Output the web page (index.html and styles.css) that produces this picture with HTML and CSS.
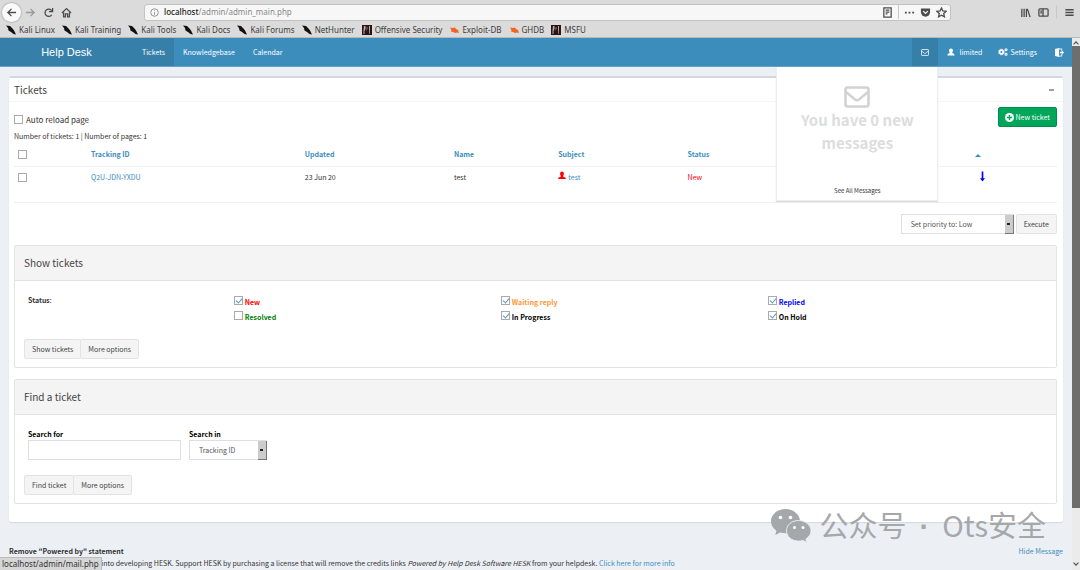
FILE: index.html
```html
<!DOCTYPE html>
<html lang="en">
<head>
  <meta charset="UTF-8">
  <meta name="viewport" content="width=device-width, initial-scale=1.0">
  <title>Help Desk</title>
  <link rel="stylesheet" href="styles.css">
</head>
<body>
<svg class="defs" aria-hidden="true">
  <symbol id="kali" viewBox="0 0 10 10"><path d="M0 .5 4 1l2.500 2.500L8 5.500 10 9.500 7.500 9 5 7 2.500 5.500 2 3z" fill="#111"/></symbol>
  <symbol id="offsec" viewBox="0 0 10 10"><path d="M0 0h10v10H0z" fill="#2a1516"/><path d="M2 1h1.500v3l-1 2v3H1.500V5zM7 1h1v3l-.5 5H7z" fill="#b9abab"/><path d="M4.500 2h1v2l-1 2z" fill="#876"/></symbol>
  <symbol id="exploit" viewBox="0 0 10 10"><path d="M1 2.500 4 3l2-.5 1 1.500 2 1 1 3-2-.5L6 8 4 7 2 6.500 2.500 5z" fill="#f0641e"/></symbol>
  <symbol id="envelope" viewBox="0 0 26 22"><rect x="1.500" y="1.500" width="23" height="19" rx="2" fill="none" stroke="currentColor" stroke-width="2.600"/><path d="M2 6l9 7.500q2 1.500 4 0L24 6" fill="none" stroke="currentColor" stroke-width="2.400"/></symbol>
</svg>

<header class="browser">
  <div class="toolbar">
    <button class="tool back" aria-label="Back"><svg viewBox="0 0 12 12"><path d="M11 6H2M6 2 2 6l4 4"/></svg></button>
    <button class="tool forward" aria-label="Forward"><svg viewBox="0 0 12 12"><path d="M1 6h9M6 2l4 4-4 4"/></svg></button>
    <button class="tool" aria-label="Reload"><svg viewBox="0 0 12 12"><path d="M9.500 8.500A4 4 0 1 1 9.500 4M10.500 1v4h-4"/></svg></button>
    <button class="tool" aria-label="Home"><svg viewBox="0 0 12 12"><path d="M1 6.500 6 1.800l5 4.700M2.800 6v4.700h2V7.500h2.400v3.200h2V6"/></svg></button>
    <div class="url-bar">
      <svg class="info" viewBox="0 0 12 12"><circle cx="6" cy="6" r="5"/><path d="M6 5.500V9M6 3v1"/></svg>
      <div class="url"><b>localhost</b>/admin/admin_main.php</div>
      <button class="tool" aria-label="Reader view"><svg viewBox="0 0 12 12"><path d="M2 1h8v10H2zM4 3.500h4M4 5.500h4M4 7.500h2"/></svg></button>
      <span class="split"></span>
      <button class="tool" aria-label="Page actions"><svg viewBox="0 0 12 12"><path d="M1 5.200h2v2H1zM5 5.200h2v2H5zM9 5.200h2v2H9z" fill="#4c4c4c" stroke="none"/></svg></button>
      <button class="tool" aria-label="Pocket"><svg viewBox="0 0 12 12"><path d="M1 1.500h10v4a5 5 0 0 1-10 0z" fill="#4c4c4c" stroke="none"/><path d="M3.500 4.500 6 7l2.500-2.500" stroke="#f7f7f7"/></svg></button>
      <button class="tool" aria-label="Bookmark"><svg viewBox="0 0 12 12"><path d="m6 1 1.500 3.300 3.600.4-2.700 2.400.8 3.600L6 8.900l-3.200 1.800.8-3.600L.9 4.700l3.600-.4z"/></svg></button>
    </div>
    <button class="tool library" aria-label="Library"><svg viewBox="0 0 12 12"><path d="M2 2v9M4.500 2v9M7 2v9M8 2l3 9"/></svg></button>
    <button class="tool" aria-label="Sidebars"><svg viewBox="0 0 12 12"><rect x="1" y="2" width="10" height="8" rx="1"/><path d="M5.500 2v8M2.500 4.500h2M2.500 6.500h2"/></svg></button>
    <span class="split"></span>
    <button class="tool" aria-label="Menu"><svg viewBox="0 0 12 12"><path d="M1.500 3h9M1.500 6h9M1.500 9h9"/></svg></button>
  </div>
  <nav class="bookmarks">
    <a href="#"><svg><use href="#kali"/></svg>Kali Linux</a>
    <a href="#"><svg><use href="#kali"/></svg>Kali Training</a>
    <a href="#"><svg><use href="#kali"/></svg>Kali Tools</a>
    <a href="#"><svg><use href="#kali"/></svg>Kali Docs</a>
    <a href="#"><svg><use href="#kali"/></svg>Kali Forums</a>
    <a href="#"><svg><use href="#kali"/></svg>NetHunter</a>
    <a href="#"><svg><use href="#offsec"/></svg>Offensive Security</a>
    <a href="#"><svg><use href="#exploit"/></svg>Exploit-DB</a>
    <a href="#"><svg><use href="#exploit"/></svg>GHDB</a>
    <a href="#"><svg><use href="#offsec"/></svg>MSFU</a>
  </nav>
</header>

<div class="viewport">
  <div class="page">
    <nav class="navbar">
      <a class="brand" href="#">Help Desk</a>
      <a class="active" href="#">Tickets</a>
      <a href="#">Knowledgebase</a>
      <a href="#">Calendar</a>
      <div class="nav-right">
        <div class="mail">
          <a class="active" href="#" aria-label="Messages"><svg class="mail-icon"><use href="#envelope"/></svg></a>
          <div class="mail-menu">
            <svg class="mail-big"><use href="#envelope"/></svg>
            <h3>You have 0 new messages</h3>
            <a href="#">See All Messages</a>
          </div>
        </div>
        <a href="#"><svg viewBox="0 0 10 10"><path d="M5 .5c3 0 3 4 1.300 5 .2.800 3 .8 3.200 4H.5c.2-3.200 3-3.200 3.200-4C2 4.500 2 .5 5 .5z"/></svg>limited</a>
        <a class="settings" href="#"><svg viewBox="0 0 12 10"><circle cx="4" cy="5" r="2.300" fill="none" stroke="#fff" stroke-width="2"/><circle cx="4" cy="5" r="3.600" fill="none" stroke="#fff" stroke-dasharray="1.600 1.230"/><circle cx="9.800" cy="2.200" r="1.300" fill="none" stroke="#fff" stroke-width="1.300"/><circle cx="9.800" cy="7.800" r="1.300" fill="none" stroke="#fff" stroke-width="1.300"/></svg>Settings</a>
        <a class="logout" href="#" aria-label="Logout"><svg viewBox="0 0 10 10"><path d="M0 1 4.500 0v10L0 9z"/><path d="M4 1h3.500v2M4 9h3.500V7" fill="none" stroke="#fff"/><path d="M5.500 4.200H7.500V2.500L10 5 7.500 7.500V5.800h-2z"/></svg></a>
      </div>
    </nav>

    <main class="box">
      <div class="box-header">
        <h1>Tickets</h1>
        <button class="collapse" aria-label="Collapse"></button>
      </div>
      <div class="box-body">
        <div class="top-row">
          <label class="reload"><input type="checkbox">Auto reload page</label>
          <button class="btn-new"><svg viewBox="0 0 10 10"><circle cx="5" cy="5" r="5" fill="#fff"/><path d="M5 2.200v5.600M2.200 5h5.600" stroke="#00a65a" stroke-width="1.600"/></svg>New ticket</button>
        </div>
        <p class="count">Number of tickets: 1 | Number of pages: 1</p>
        <table class="tickets">
          <colgroup>
            <col class="c-check"><col class="c-id"><col class="c-updated"><col class="c-name"><col class="c-subject"><col class="c-status"><col class="c-priority">
          </colgroup>
          <thead>
            <tr>
              <th><input type="checkbox" aria-label="Select all"></th>
              <th><a href="#">Tracking ID</a></th>
              <th><a href="#">Updated</a></th>
              <th><a href="#">Name</a></th>
              <th><a href="#">Subject</a></th>
              <th><a href="#">Status</a></th>
              <th><a href="#" aria-label="Priority"><span class="caret"></span></a></th>
            </tr>
          </thead>
          <tbody>
            <tr>
              <td><input type="checkbox" aria-label="Select ticket"></td>
              <td><a href="#">Q2U-JDN-YXDU</a></td>
              <td>23 Jun 20</td>
              <td>test</td>
              <td><svg class="owner" viewBox="0 0 10 10"><path d="M5 0c3 0 2.800 4.300 1.300 5.500 0 1.500 3.700 1 3.700 4H0c0-3 3.700-2.500 3.700-4C2.200 4.300 2 0 5 0z"/></svg><a href="#">test</a></td>
              <td class="new">New</td>
              <td><svg class="priority" viewBox="0 0 6 12"><path d="M2 0h2v8h2L3 12 0 8h2z"/></svg></td>
            </tr>
          </tbody>
        </table>

        <div class="bulk">
          <span class="select"><select class="priority-select" aria-label="Action"><option>Set priority to: Low</option></select></span>
          <button class="btn">Execute</button>
        </div>

        <section class="panel">
          <h2>Show tickets</h2>
          <div class="panel-body">
            <div class="status">
              <div class="status-label"><b>Status</b>:</div>
              <label class="new"><input type="checkbox" checked>New</label>
              <label class="waiting"><input type="checkbox" checked>Waiting reply</label>
              <label class="replied"><input type="checkbox" checked>Replied</label>
              <label class="resolved"><input type="checkbox">Resolved</label>
              <label><input type="checkbox" checked>In Progress</label>
              <label><input type="checkbox" checked>On Hold</label>
            </div>
            <div class="btn-group">
              <button class="btn">Show tickets</button>
              <button class="btn">More options</button>
            </div>
          </div>
        </section>

        <section class="panel">
          <h2>Find a ticket</h2>
          <div class="panel-body">
            <div class="search">
              <div class="field">
                <label for="q">Search for</label>
                <input type="text" id="q">
              </div>
              <div class="field">
                <label for="what">Search in</label>
                <span class="select"><select id="what"><option>Tracking ID</option></select></span>
              </div>
            </div>
            <div class="btn-group">
              <button class="btn">Find ticket</button>
              <button class="btn">More options</button>
            </div>
          </div>
        </section>
      </div>
    </main>

    <footer class="notice">
      <div class="notice-head"><b>Remove "Powered by" statement</b><a href="#">Hide Message</a></div>
      <p>A lot of time and effort went into developing HESK. Support HESK by purchasing a license that will remove the credits links <i>Powered by Help Desk Software HESK</i> from your helpdesk. <a href="#">Click here for more info</a></p>
    </footer>
  </div>
  <div class="scrollbar">
    <span class="arrow up"></span>
    <span class="thumb"></span>
    <span class="arrow down"></span>
  </div>
</div>

<div class="link-status">localhost/admin/mail.php</div>

<div class="watermark">
  <svg viewBox="0 0 40 34">
    <path d="M14.500 0C6.500 0 0 5.500 0 12.300c0 3.900 2.100 7.200 5.400 9.400L4.300 26l4.900-2.600c1.700.5 3.400.8 5.300.8C22.500 24.200 29 19 29 12.300S22.500 0 14.500 0z"/>
    <path class="front" d="M27.500 11.500c-6.800 0-12 4.600-12 10.300s5.200 10.300 12 10.300c1.500 0 3-.3 4.400-.7l4 2-1-3.400c3-1.900 5.100-4.800 5.100-8.200 0-5.700-5.700-10.300-12.500-10.300z"/>
    <g fill="#fff"><circle cx="9.500" cy="8.500" r="1.800"/><circle cx="19.500" cy="8.500" r="1.800"/><circle cx="23.500" cy="18.500" r="1.500"/><circle cx="32" cy="18.500" r="1.500"/></g>
  </svg>
  <span>公众号<span class="dot">·</span>Ots安全</span>
</div>
</body>
</html>
```
FILE: styles.css
```css
* {
  box-sizing: border-box;
}
body {
  margin: 0;
  height: 100vh;
  display: flex;
  flex-direction: column;
  overflow: hidden;
  font-family: "Noto Sans CJK SC", "Noto Sans", sans-serif;
  font-size: 7px;
  line-height: 12px;
  color: #333;
  background: #ecf0f5;
}
a {
  color: #3c8dbc;
  text-decoration: none;
}
h1, h2, h3, p {
  margin: 0;
  font-weight: normal;
}
button {
  font: inherit;
  color: inherit;
  padding: 0;
  border: none;
  background: none;
  cursor: pointer;
}
.defs {
  position: absolute;
  width: 0;
  height: 0;
}

/* browser chrome */
.browser {
  background: #dbdbdb;
  border-bottom: 1px solid #b9b9b9;
  font-family: "Noto Sans", sans-serif;
  font-size: 8px;
  color: #3b3b3b;
}
.toolbar {
  display: flex;
  align-items: center;
  gap: 7px;
  height: 22px;
  padding: 2px 5px 0 2px;
}
.tool {
  display: flex;
  flex: none;
}
.tool svg, .info {
  width: 11px;
  height: 11px;
  fill: none;
  stroke: #4c4c4c;
  stroke-width: 1.4;
}
.back {
  padding: 4px;
  border-radius: 50%;
  background: #fafafa;
  box-shadow: 0 0 1px 1px #bbb;
}
.back + .forward {
  margin-left: -3px;
}
.forward svg {
  stroke: #999;
}
.url-bar {
  flex: 1;
  display: flex;
  align-items: center;
  gap: 5px;
  height: 17px;
  margin-left: 65px;
  padding: 0 3px 0 5px;
  border: 1px solid #c2c2c2;
  border-radius: 3px;
  background: #f7f7f7;
}
.info {
  width: 9px;
  height: 9px;
  stroke: #777;
  stroke-width: 1;
}
.url {
  flex: 1;
  color: #888;
}
.url b {
  font-weight: 500;
  color: #222;
}
.split {
  width: 1px;
  height: 14px;
  background: #c8c8c8;
}
.library {
  margin-left: 62px;
}
.bookmarks {
  display: flex;
  gap: 7px;
  height: 15px;
  padding-left: 6px;
  line-height: 15px;
}
.bookmarks a {
  display: flex;
  align-items: center;
  gap: 3px;
  color: inherit;
  white-space: nowrap;
}
.bookmarks svg {
  width: 10px;
  height: 10px;
}

.viewport {
  flex: 1;
  min-height: 0;
  display: flex;
}
.page {
  flex: 1;
  overflow: hidden;
}

/* navbar */
.navbar {
  display: flex;
  height: 29px;
  background: #3c8dbc;
  border-bottom: 1px solid #5fa3cb;
}
.navbar > a, .nav-right > a, .mail > a {
  display: flex;
  align-items: center;
  gap: 4px;
  height: 28px;
  padding: 0 9px;
  color: #fff;
}
.navbar svg {
  width: 8px;
  height: 8px;
  fill: #fff;
}
.navbar .brand {
  width: 133px;
  justify-content: center;
  background: #367fa9;
  font-family: "Liberation Sans", Arial, sans-serif;
  font-size: 11px;
}
.navbar .active {
  background: #367fa9;
}
.nav-right {
  display: flex;
  margin-left: auto;
}
.nav-right .settings {
  gap: 2px;
  padding-left: 7px;
}
.navbar .settings svg {
  width: 10px;
}
.nav-right .logout {
  padding-right: 8px;
}
.navbar .logout svg {
  width: 9px;
  height: 9px;
}
.mail {
  position: relative;
}
.navbar .mail-icon {
  width: 8px;
  height: 7px;
  color: #fff;
}
.mail-menu {
  position: absolute;
  top: 29px;
  right: 0;
  z-index: 2;
  width: 162px;
  height: 134px;
  padding-top: 19px;
  display: flex;
  flex-direction: column;
  align-items: center;
  background: #fff;
  border: 1px solid #eee;
  border-top: none;
  box-shadow: 0 1px 1px #ddd;
  text-align: center;
}
.mail-menu .mail-big {
  width: 26px;
  height: 22px;
  color: #d2d2d2;
}
.mail-menu h3 {
  padding: 0 20px;
  font-size: 15px;
  line-height: 23px;
  font-weight: bold;
  color: #ddd;
}
.mail-menu a {
  margin-top: auto;
  padding-bottom: 3px;
  font-size: 6px;
  color: #333;
}

/* main box */
.box {
  margin: 9px 9px 0;
  border-top: 2px solid #d2d6de;
  border-radius: 2px;
  background: #fff;
  box-shadow: 0 1px 1px #d5d8dc;
}
.box-header {
  display: flex;
  align-items: center;
  justify-content: space-between;
  height: 24px;
  padding: 0 9px 0 5px;
  border-bottom: 1px solid #f4f4f4;
}
.box-header h1, .panel h2 {
  font-size: 10px;
  color: #444;
}
.collapse {
  width: 5px;
  height: 2px;
  background: #97a0b3;
}
.box-body {
  padding: 5px 6px 18px 5px;
}
.top-row {
  display: flex;
  justify-content: space-between;
  height: 23px;
}
.reload {
  display: flex;
  align-items: center;
  align-self: flex-end;
  gap: 3px;
  height: 21px;
  font-size: 8px;
}
.btn-new {
  display: flex;
  align-items: center;
  gap: 2px;
  height: 20px;
  padding: 0 6px;
  border: 1px solid #008d4c;
  border-radius: 2px;
  background: #00a65a;
  color: #fff;
}
.btn-new svg {
  width: 9px;
  height: 9px;
}
input[type="checkbox"] {
  appearance: none;
  position: relative;
  flex: none;
  width: 9px;
  height: 9px;
  margin: 0;
  border: 1px solid #aaa;
  background: #fff;
}
input[type="checkbox"]:checked::after {
  content: "";
  position: absolute;
  top: 0;
  left: 2px;
  width: 3px;
  height: 5px;
  border: solid #5b9ac8;
  border-width: 0 1px 1px 0;
  transform: rotate(40deg);
}

/* ticket list */
.tickets {
  width: 100%;
  margin-top: 1px;
  table-layout: fixed;
  border-collapse: collapse;
}
.c-check { width: 7%; }
.c-id { width: 20.5%; }
.c-updated { width: 14.3%; }
.c-name { width: 10%; }
.c-subject { width: 12.4%; }
.c-status { width: 27.6%; }
.tickets th, .tickets td {
  height: 23px;
  padding: 0 4px;
  text-align: left;
  border-bottom: 1px solid #f0f0f0;
}
.tickets tbody td {
  height: 36px;
  padding-top: 4px;
  vertical-align: top;
}
.tickets input {
  display: block;
}
.tickets td input {
  margin-top: 2px;
}
.caret {
  display: inline-block;
  border: 3px solid transparent;
  border-top: none;
  border-bottom-color: #3c8dbc;
  vertical-align: middle;
}
.owner {
  width: 8px;
  height: 9px;
  margin-right: 2px;
  fill: red;
}
.priority {
  width: 5px;
  height: 11px;
  margin-left: 5px;
  fill: blue;
}
.new { color: red; }
.waiting { color: #ff9933; }
.replied { color: blue; }
.resolved { color: green; }

/* controls */
.bulk {
  display: flex;
  justify-content: flex-end;
  gap: 2px;
  margin: 11px 0;
}
.btn {
  height: 20px;
  padding: 0 7px;
  border: 1px solid #e3e3e3;
  border-radius: 2px;
  background: #f4f4f4;
  color: #444;
}
.btn-group {
  display: flex;
}
.btn-group .btn + .btn {
  margin-left: -1px;
}
select, input[type="text"] {
  appearance: none;
  height: 20px;
  margin: 0;
  padding: 0 9px;
  border: 1px solid #dcdfe5;
  border-radius: 0;
  background: #fff;
  font: inherit;
  color: #555;
}
.select {
  position: relative;
  display: inline-flex;
}
.select select {
  width: 78px;
}
.select .priority-select {
  width: 113px;
}
.select::after {
  content: "";
  position: absolute;
  top: 1px;
  right: 0;
  width: 8px;
  height: 18px;
  background: linear-gradient(#222, #222) 2px 8px / 3px 2px no-repeat, #ccc;
  border-right: 1px solid #777;
  border-bottom: 1px solid #777;
  pointer-events: none;
}

/* panels */
.panel {
  border: 1px solid #e3e3e3;
  border-radius: 2px;
}
.panel + .panel {
  margin-top: 11px;
}
.panel h2 {
  padding: 0 9px;
  line-height: 34px;
  background: #f4f4f4;
  border-bottom: 1px solid #e3e3e3;
}
.panel-body {
  padding: 13px 9px 8px;
}
.status {
  display: grid;
  grid-template-columns: 20.2% 26.2% 26.2% 1fr;
  row-gap: 2px;
  padding-left: 4px;
  color: #000;
}
.status-label {
  grid-row: span 2;
  color: #333;
}
.status label {
  display: flex;
  align-items: flex-end;
  gap: 2px;
  height: 13px;
  line-height: 9px;
  font-weight: bold;
}
.status input {
  align-self: center;
}
.status + .btn-group {
  margin-top: 17px;
}
.search {
  display: flex;
  gap: 8px;
  padding-left: 4px;
}
.search .field {
  display: flex;
  flex-direction: column;
  align-items: flex-start;
}
.search label {
  font-weight: bold;
  color: #000;
}
.search input {
  width: 153px;
}
.search + .btn-group {
  margin-top: 15px;
}

.notice {
  padding: 23px 9px 0;
}
.notice-head {
  display: flex;
  justify-content: space-between;
}
.notice p {
  white-space: nowrap;
}

/* scrollbar */
.scrollbar {
  display: flex;
  flex-direction: column;
  align-items: center;
  width: 8px;
  background: #ebebeb;
}
.thumb {
  flex: 1;
  width: 8px;
  margin-bottom: 53px;
  background: #6e6e6c;
}
.arrow {
  width: 4px;
  height: 4px;
  margin: 4px 0 0;
  border: solid #444;
  border-width: 1px 0 0 1px;
  transform: rotate(45deg);
}
.arrow.down {
  margin: 0 0 5px;
  transform: rotate(225deg);
}

.link-status {
  position: absolute;
  left: 0;
  bottom: 0;
  padding: 0 2px;
  border: solid #bbb;
  border-width: 1px 1px 0 0;
  background: #d6d6d6;
  font-family: "Noto Sans", sans-serif;
  font-size: 8px;
}
.watermark {
  position: absolute;
  right: 34px;
  bottom: 23px;
  z-index: 3;
  display: flex;
  align-items: center;
  gap: 9px;
  font-size: 29px;
  line-height: 40px;
  color: #a5a8ab;
  white-space: nowrap;
}
.watermark .dot {
  padding: 0 13px;
  font-family: "Liberation Sans", sans-serif;
  font-weight: bold;
}
.watermark svg {
  width: 40px;
  height: 34px;
  fill: #a5a8ab;
}
.watermark .front {
  stroke: #e8ebef;
}
```
